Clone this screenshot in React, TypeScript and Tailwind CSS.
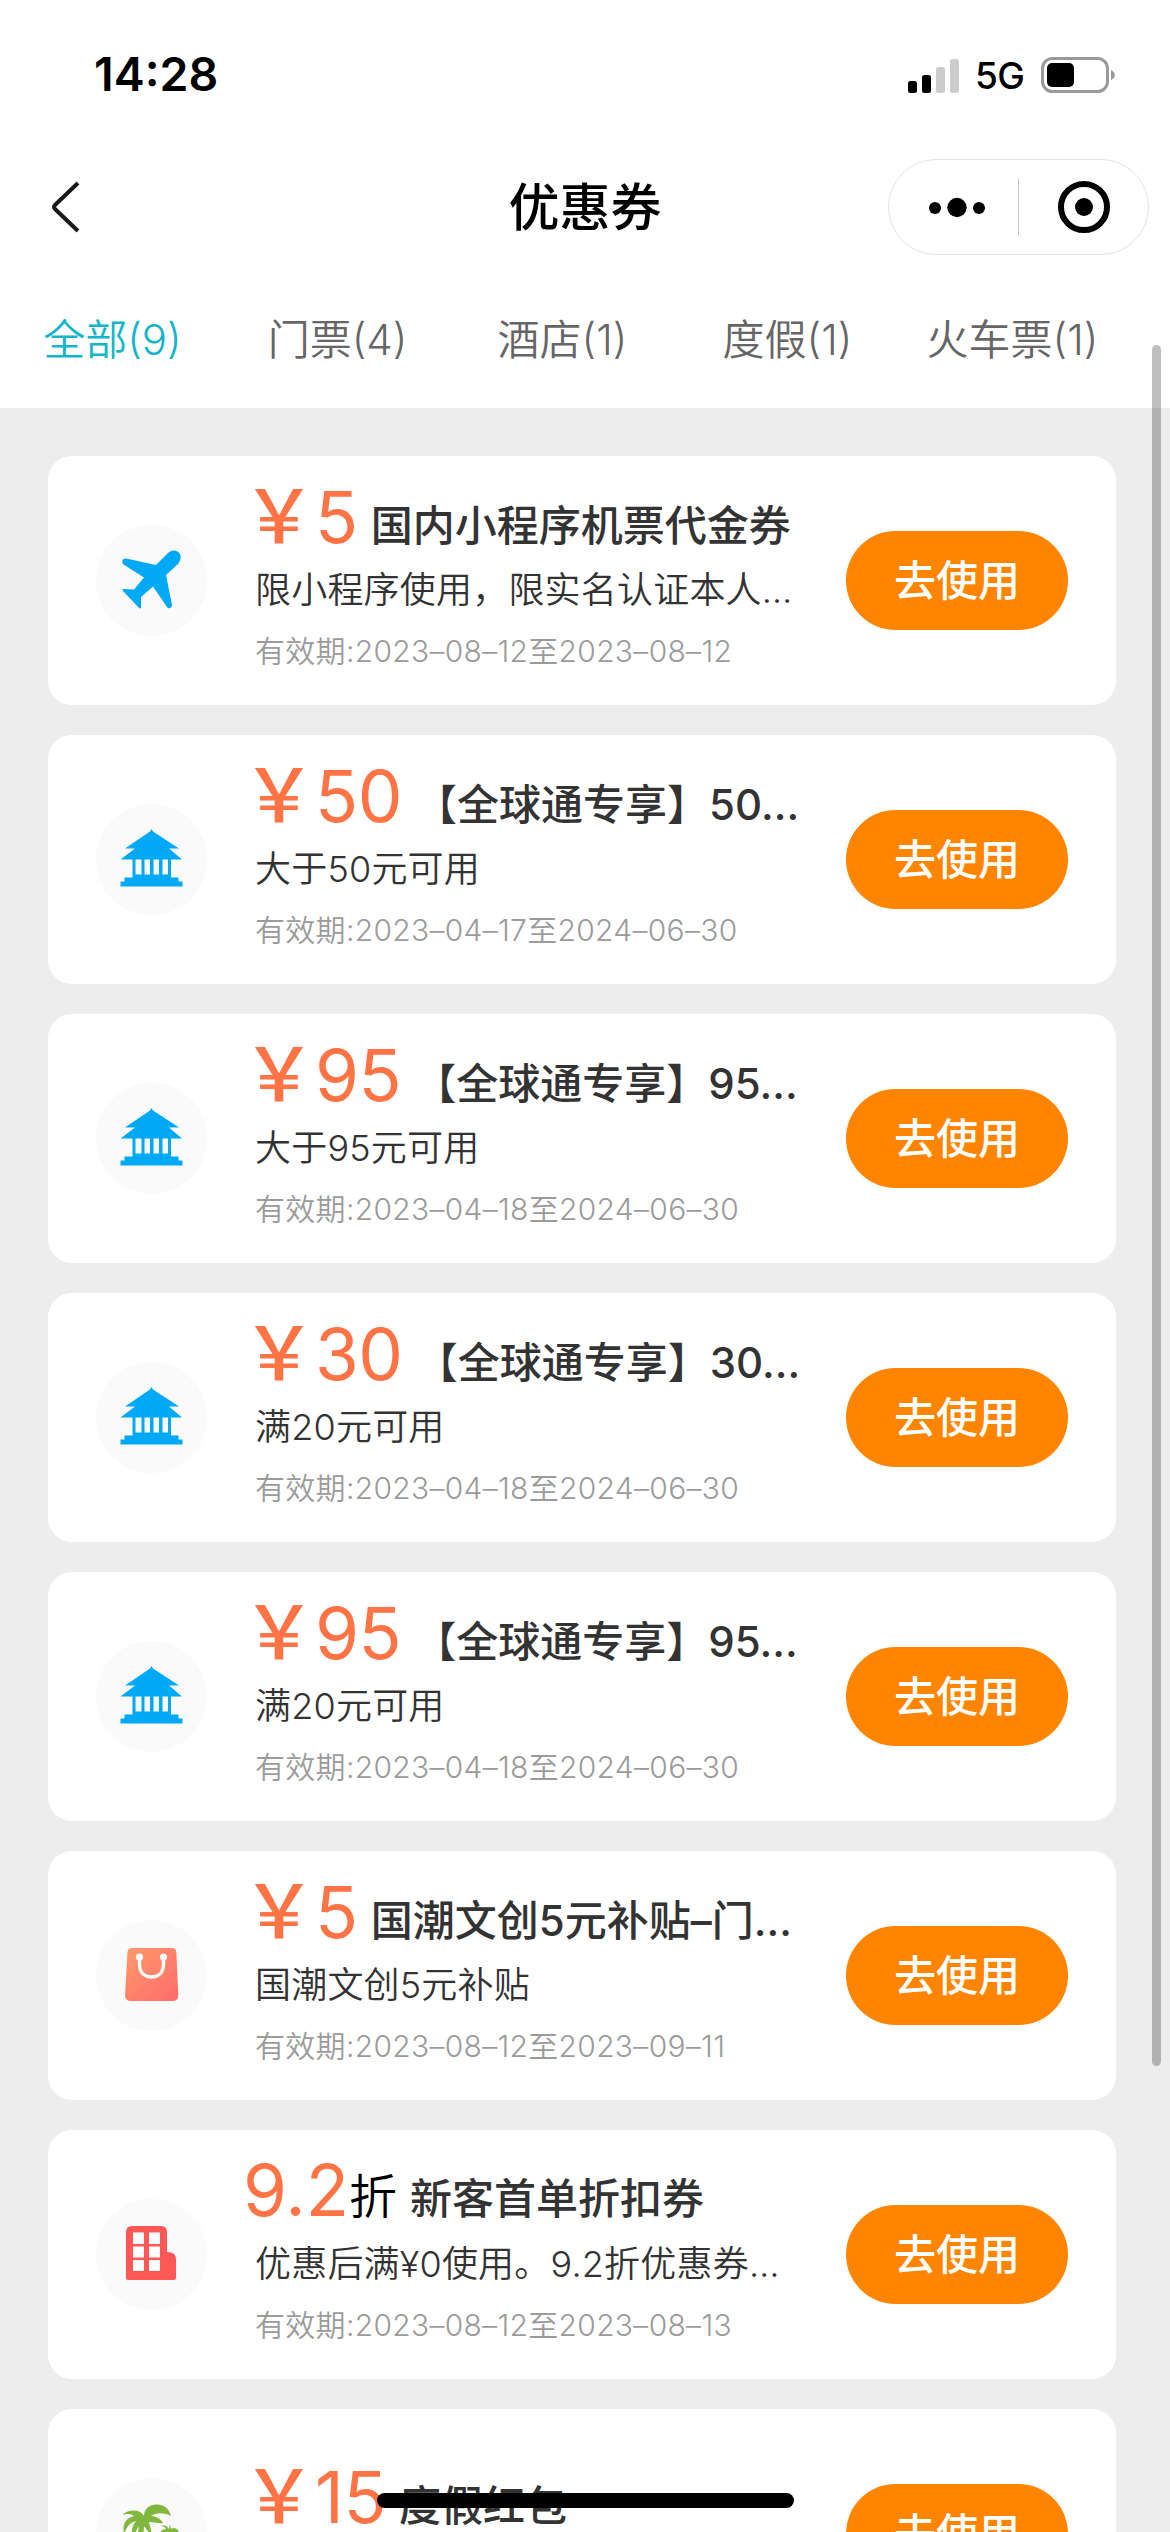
import React from 'react'

type IconName = 'plane' | 'pavilion' | 'bag' | 'building' | 'palm'

interface Coupon {
  id: number
  icon: IconName
  amount: string
  unit: 'yuan' | 'discount'
  title: string
  description?: string
  validity?: string
}

const tabs = [
  { label: '全部(9)', active: true },
  { label: '门票(4)', active: false },
  { label: '酒店(1)', active: false },
  { label: '度假(1)', active: false },
  { label: '火车票(1)', active: false },
]

const coupons: Coupon[] = [
  { id: 1, icon: 'plane', amount: '5', unit: 'yuan', title: '国内小程序机票代金券', description: '限小程序使用，限实名认证本人…', validity: '有效期:2023–08–12至2023–08–12' },
  { id: 2, icon: 'pavilion', amount: '50', unit: 'yuan', title: '【全球通专享】50…', description: '大于50元可用', validity: '有效期:2023–04–17至2024–06–30' },
  { id: 3, icon: 'pavilion', amount: '95', unit: 'yuan', title: '【全球通专享】95…', description: '大于95元可用', validity: '有效期:2023–04–18至2024–06–30' },
  { id: 4, icon: 'pavilion', amount: '30', unit: 'yuan', title: '【全球通专享】30…', description: '满20元可用', validity: '有效期:2023–04–18至2024–06–30' },
  { id: 5, icon: 'pavilion', amount: '95', unit: 'yuan', title: '【全球通专享】95…', description: '满20元可用', validity: '有效期:2023–04–18至2024–06–30' },
  { id: 6, icon: 'bag', amount: '5', unit: 'yuan', title: '国潮文创5元补贴–门…', description: '国潮文创5元补贴', validity: '有效期:2023–08–12至2023–09–11' },
  { id: 7, icon: 'building', amount: '9.2', unit: 'discount', title: '新客首单折扣券', description: '优惠后满¥0使用。9.2折优惠券…', validity: '有效期:2023–08–12至2023–08–13' },
  { id: 8, icon: 'palm', amount: '15', unit: 'yuan', title: '度假红包' },
]

// every glyph is drawn on the 111 x 111 box of its round badge
const icons: Record<IconName, React.ReactNode> = {
  plane: (
    <path fill="#00a9f5" d="M60 40 L72 28 C76 24 82 25 84 29 C85.500 32 84.500 36 82 39 L70 50 L76 80 C76.500 83 72 84.500 71 82 L57 61.500 L45 72 L45 83 L43.500 83.500 L26.500 65.500 L27 64 L38 64.500 L48 52.500 L27.500 39.500 C25 37 26.500 33 30 33.500 Z" />
  ),
  pavilion: (
    <path fill="#00a9f5" fillRule="evenodd" d="M55.500 25 L57 27.500 L83 44.500 L73 44.500 L86 55.500 L75 55.500 L75 73.500 L82.500 73.500 L82.500 77.500 L86.500 77.500 L86.500 82.500 L24.500 82.500 L24.500 77.500 L28.500 77.500 L28.500 73.500 L36.500 73.500 L36.500 55.500 L24.500 55.500 L39 44.500 L29 44.500 L54 27.500 Z M39.500 55.500 V70.500 H45.500 V55.500 Z M48.500 55.500 V70.500 H54 V55.500 Z M57.500 55.500 V70.500 H63 V55.500 Z M66.500 55.500 V70.500 H72 V55.500 Z" />
  ),
  bag: (
    <>
      <defs>
        <linearGradient id="bag-fill" x1="0" y1="0" x2="1" y2="1">
          <stop offset="0" stopColor="#ff9a69" />
          <stop offset="1" stopColor="#ff6b6b" />
        </linearGradient>
      </defs>
      <path fill="url(#bag-fill)" d="M36 28 H76 Q80 28 80.300 32 L82.300 75 Q82.300 81 76 81 H35 Q29 81 29 75 L31.500 32 Q32 28 36 28 Z" />
      <circle cx="43.500" cy="37" r="3.600" fill="#fff" />
      <circle cx="67.500" cy="37" r="3.600" fill="#fff" />
      <path fill="none" stroke="#fff" strokeWidth="3.400" d="M43.500 38 V44 C43.500 53 49 57 55.500 57 C62 57 67.500 53 67.500 44 V38" />
    </>
  ),
  building: (
    <>
      <path fill="#ff5755" d="M36 27 H65 Q71 27 71 33 V53 Q80 53 80 60 V79 Q80 81 78 81 H32 Q30 81 30 79 V33 Q30 27 36 27 Z" />
      <path fill="#fff" d="M37 33.500 H48 V45 H37 Z M53 33.500 H64 V45 H53 Z M37 47.500 H48 V58.500 H37 Z M53 47.500 H64 V58.500 H53 Z M37 61 H48 V72 H37 Z M53 61 H64 V72 H53 Z" />
    </>
  ),
  palm: (
    <>
      <path fill="#7fb83d" d="M48 38 C44 31 33 31 26 37 C32 35 36 36 38 38 C30 40 26 46 28 56 C31 48 35 44 40 43 C36 48 35 54 36 60 L43 48 L38 80 L46 80 L48 48 L57 60 L53 44 C59 44 64 46 67 45 C65 41 60 38 55 38 C62 34 69 35 75 38 C73 29 66 26 60 26.500 C53 27 48 31 48 38 Z" />
      <path fill="#7fb83d" d="M73 51 C71 48 68 46 65 48 C68 48 69 49 70 51 C65 51 63 55 64 60 L70 56 L69 80 L74 80 L75 56 L81 63 C82 58 84 57 82 52 C80 50 77 49 75 51 L74 46 Z" />
    </>
  ),
}

const StatusBar = () => (
  <div className="flex h-[150px] items-center justify-between pl-[94px] pr-[54px]">
    <span className="-mt-[2px] text-[46.5px] leading-none font-semibold">14:28</span>
    <div className="flex items-center">
      <svg className="h-[36px] w-[52px]" viewBox="0 0 52 36">
        <rect x="0" y="24" width="9" height="12" rx="2.500" />
        <rect x="14" y="18" width="9" height="18" rx="2.500" />
        <rect x="28" y="10" width="9" height="26" rx="2.500" fill="#ccc" />
        <rect x="42" y="2" width="9" height="34" rx="2.500" fill="#ccc" />
      </svg>
      <span className="ml-[15px] w-[66px] text-[37px] leading-none font-medium tracking-[-0.5px]">5G</span>
      <svg className="h-[36px] w-[75px]" viewBox="0 0 75 36">
        <rect x="1.500" y="1.500" width="65" height="33" rx="10" fill="none" stroke="#999" strokeWidth="3" />
        <rect x="6" y="6" width="27" height="24" rx="5" />
        <path d="M70 13 C75 15 75 21 70 23 Z" fill="#999" />
      </svg>
    </div>
  </div>
)

const NavBar = () => (
  <div className="grid h-[114px] grid-cols-[1fr_auto_1fr] items-center">
    <div className="pl-[51px]">
      <svg className="h-[52px] w-[30px]" viewBox="0 0 30 52">
        <path d="M27 2 L4 24 Q2 26 4 28 L27 50" fill="none" stroke="#1a1a1a" strokeWidth="4" />
      </svg>
    </div>
    <h1 className="text-[51px] leading-none font-medium text-black">优惠券</h1>
    <div className="flex justify-end pr-[21px]">
      <div className="flex h-[96px] w-[261px] items-center rounded-full border border-[#e2e2e2]">
        <svg className="h-full w-full" viewBox="0 0 259 94">
          <circle cx="46" cy="48" r="6" />
          <circle cx="68" cy="47.500" r="9.700" />
          <circle cx="90" cy="48" r="6" />
          <rect x="129" y="19" width="1" height="56" fill="#c4c4c4" />
          <circle cx="195" cy="47" r="23" fill="none" stroke="#000" strokeWidth="6" />
          <circle cx="195" cy="47" r="9" />
        </svg>
      </div>
    </div>
  </div>
)

const CouponCard = ({ coupon }: { coupon: Coupon }) => (
  <div className="flex h-[249px] shrink-0 items-center rounded-[24px] bg-white px-[48px]">
    <svg className="size-[111px] shrink-0 rounded-full bg-[#fafafa]" viewBox="0 0 111 111">
      {icons[coupon.icon]}
    </svg>
    <div className="ml-[48px] h-full w-[591px] whitespace-nowrap">
      <div className={`flex h-[104px] items-baseline ${coupon.description ? 'pt-[15px]' : 'pt-[42px]'}`}>
        {coupon.unit === 'yuan' ? (
          <>
            <span className="-ml-[13px] w-[73px] text-[74px] leading-[90px] font-medium text-[#ff7345]">￥</span>
            <span className="text-[71px] leading-[90px] tracking-[-0.5px] text-[#ff7345]">{coupon.amount}</span>
          </>
        ) : (
          <>
            <span className="-ml-[12px] text-[71px] leading-[90px] text-[#ff7345]">{coupon.amount}</span>
            <span className="-translate-y-[2px] text-[48px] font-[350] text-black">折</span>
          </>
        )}
        <span className="ml-[13px] -translate-y-[2px] text-[42px] font-medium text-[#333]">{coupon.title}</span>
      </div>
      <p className="h-[60px] text-[36px] leading-[60px] font-[350] tracking-[0.2px] text-[#333]">{coupon.description}</p>
      <p className="h-[62px] text-[30px] leading-[62px] font-[350] tracking-[0.3px] text-[#9b9b9b]">{coupon.validity}</p>
    </div>
    <button className="h-[99px] w-[222px] shrink-0 rounded-full bg-[#ff8400] text-[42px] leading-none font-medium text-white">
      去使用
    </button>
  </div>
)

const App = () => {
  return (
    <div className="relative flex h-[2532px] w-[1170px] flex-col overflow-hidden bg-white font-['Inter','Noto_Sans_CJK_SC',sans-serif]">
      <StatusBar />
      <NavBar />
      <div className="flex h-[144px] items-center pt-[7px]">
        {tabs.map(tab => (
          <div
            key={tab.label}
            className={`w-[225px] shrink-0 text-center text-[42px] leading-none font-[350] ${tab.active ? 'text-[#13b5cb]' : 'text-[#666]'}`}
          >
            {tab.label}
          </div>
        ))}
      </div>
      <div className="flex flex-1 flex-col gap-[30px] overflow-hidden bg-[#ededed] pt-[48px] pr-[54px] pl-[48px]">
        {coupons.map(coupon => (
          <CouponCard key={coupon.id} coupon={coupon} />
        ))}
      </div>

      {/* scroll thumb and home indicator float above the list */}
      <div className="absolute top-[345px] right-[9px] h-[1721px] w-[9px] rounded-full bg-black/25" />
      <div className="absolute bottom-[24px] left-[377px] h-[15px] w-[417px] rounded-full bg-black" />
    </div>
  )
}

export default App
